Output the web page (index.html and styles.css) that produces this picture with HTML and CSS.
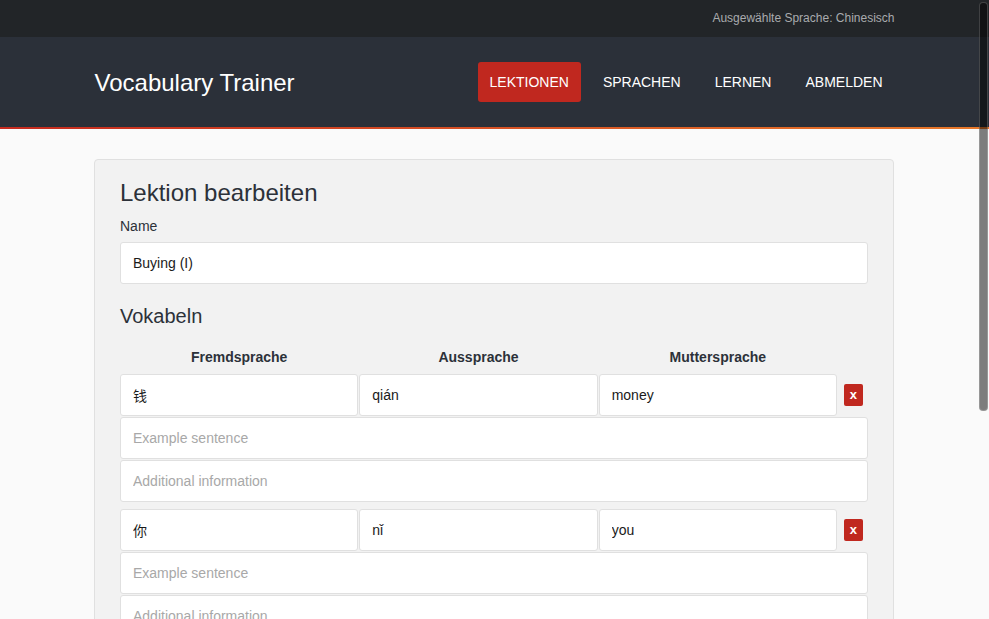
FILE: index.html
```html
<!DOCTYPE html>
<html lang="de">
<head>
<meta charset="utf-8">
<title>Vocabulary Trainer</title>
<link rel="stylesheet" href="styles.css">
</head>
<body>
<div class="topbar">
  <div class="container topbar-inner">Ausgewählte Sprache: Chinesisch</div>
</div>
<header class="nav">
  <div class="container nav-inner">
    <div class="brand">Vocabulary Trainer</div>
    <nav class="menu">
      <a class="menu-item active">LEKTIONEN</a>
      <a class="menu-item">SPRACHEN</a>
      <a class="menu-item">LERNEN</a>
      <a class="menu-item">ABMELDEN</a>
    </nav>
  </div>
</header>
<main class="container">
  <section class="card">
    <h2 class="title">Lektion bearbeiten</h2>
    <label class="label">Name</label>
    <input class="field" type="text" value="Buying (I)">
    <h3 class="subtitle">Vokabeln</h3>
    <div class="vocab-head">
      <div>Fremdsprache</div>
      <div>Aussprache</div>
      <div>Muttersprache</div>
      <div></div>
    </div>
    <div class="vocab">
      <div class="vocab-row">
        <input class="field" type="text" value="钱">
        <input class="field" type="text" value="qián">
        <input class="field" type="text" value="money">
        <button class="del">x</button>
      </div>
      <input class="field" type="text" placeholder="Example sentence">
      <input class="field" type="text" placeholder="Additional information">
    </div>
    <div class="vocab">
      <div class="vocab-row">
        <input class="field" type="text" value="你">
        <input class="field" type="text" value="nǐ">
        <input class="field" type="text" value="you">
        <button class="del">x</button>
      </div>
      <input class="field" type="text" placeholder="Example sentence">
      <input class="field" type="text" placeholder="Additional information">
    </div>
  </section>
</main>
<div class="scroll-thumb"></div>
</body>
</html>
```

FILE: styles.css
```css
html {
  scrollbar-width: none;
}
html::-webkit-scrollbar {
  display: none;
}
body {
  margin: 0;
  padding-right: 1px;
  background: #fafafa;
  font-family: "Liberation Sans", "Noto Sans CJK SC", Arial, sans-serif;
  font-size: 14px;
  color: #2c3139;
}
.container {
  width: 800px;
  margin: 0 auto;
}
.topbar {
  background: #222528;
  height: 37px;
  margin-right: -1px;
}
.topbar-inner {
  text-align: right;
  line-height: 36px;
  font-size: 12px;
  color: #a9abae;
}
.nav {
  margin-right: -1px;
  background: #2b3039;
  border-bottom: 2px solid transparent;
  border-image: linear-gradient(90deg, #c62a1f, #e8792a) 1;
}
.nav-inner {
  height: 90px;
  display: flex;
  align-items: center;
  justify-content: space-between;
}
.brand {
  font-size: 24px;
  line-height: 29px;
  color: #fff;
}
.menu {
  display: flex;
  gap: 10px;
}
.menu-item {
  display: block;
  padding: 10px 12px;
  line-height: 20px;
  font-size: 14px;
  color: #fff;
  border-radius: 3px;
}
.menu-item.active {
  background: #c0281f;
}
.card {
  margin-top: 30px;
  background: #f2f2f2;
  border: 1px solid #e0e0e0;
  border-radius: 4px;
  padding: 18px 25px 30px;
}
.title {
  margin: 0 0 9px;
  font-size: 24px;
  line-height: 29px;
  font-weight: normal;
}
.label {
  display: block;
  line-height: 20px;
  margin-bottom: 6px;
  color: #2c3139;
}
.field {
  display: block;
  box-sizing: border-box;
  width: 100%;
  height: 42px;
  margin: 0;
  padding: 0 12px;
  border: 1px solid #e0e0e0;
  border-radius: 3px;
  background: #fff;
  font-family: "Liberation Sans", "Noto Sans CJK SC", Arial, sans-serif;
  font-size: 14px;
  color: #1a1a1a;
  outline: none;
}
.field::placeholder {
  color: #a8a8a8;
}
.subtitle {
  margin: 20px 0 19px;
  font-size: 20px;
  line-height: 24px;
  font-weight: normal;
}
.vocab-head,
.vocab-row {
  display: grid;
  grid-template-columns: 1fr 1fr 1fr 30px;
  gap: 1px;
}
.vocab-head {
  font-weight: bold;
  text-align: center;
  line-height: 20px;
  margin-bottom: 7px;
}
.vocab {
  display: flex;
  flex-direction: column;
  gap: 1px;
  margin-bottom: 7px;
}
.del {
  justify-self: start;
  align-self: center;
  margin-left: 6px;
  width: 19px;
  height: 22px;
  padding: 0;
  border: 0;
  border-radius: 2px;
  background: #c0281f;
  color: #fff;
  font-family: "Liberation Sans", Arial, sans-serif;
  font-size: 13px;
  font-weight: bold;
  line-height: 20px;
}
.scroll-thumb {
  position: fixed;
  top: 2px;
  right: 1px;
  width: 7px;
  height: 407px;
  border-radius: 4px;
  background: rgba(0, 0, 0, 0.5);
  border: 1px solid rgba(255, 255, 255, 0.2);
}
```
